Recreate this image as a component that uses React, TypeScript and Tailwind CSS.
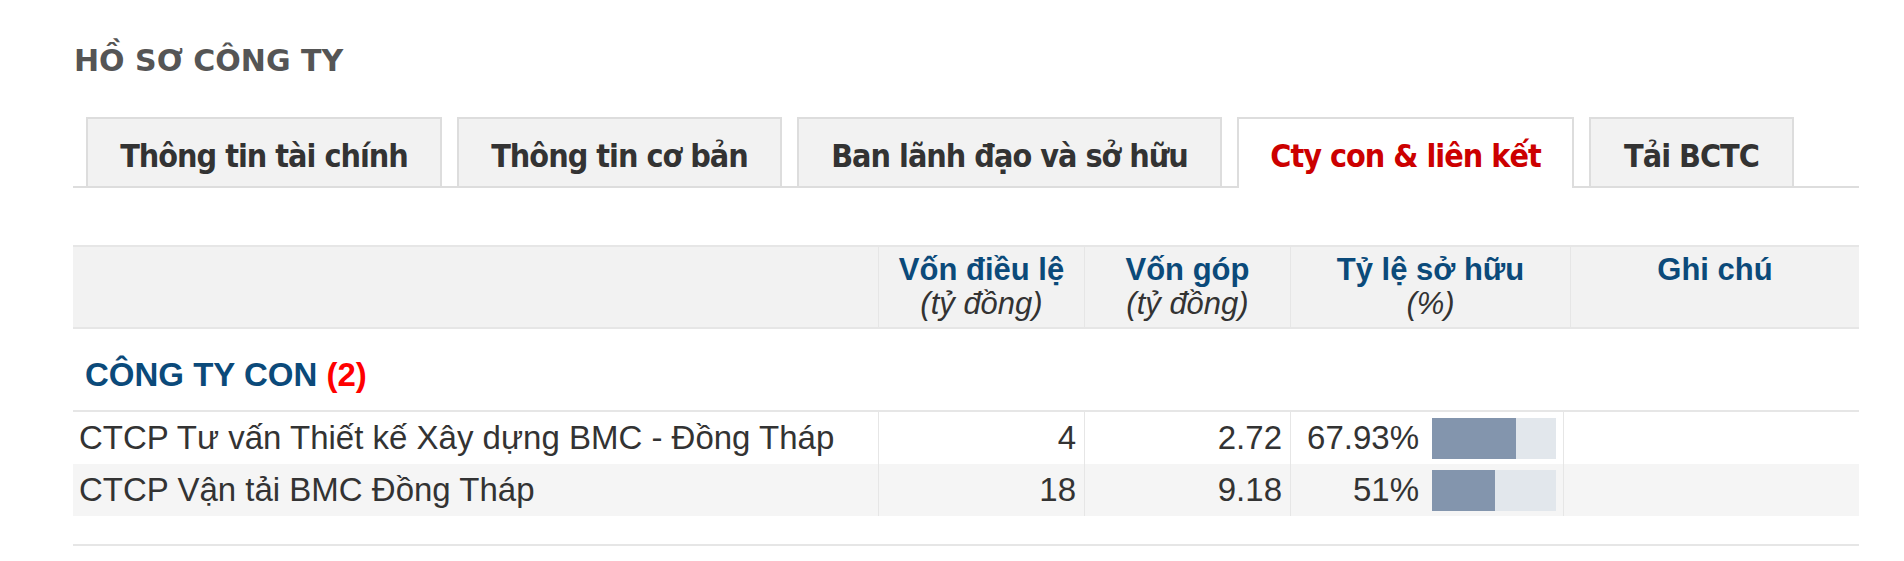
import React from 'react';

const TABS = [
  { label: 'Thông tin tài chính', w: 'w-[356px]' },
  { label: 'Thông tin cơ bản', w: 'w-[325px]' },
  { label: 'Ban lãnh đạo và sở hữu', w: 'w-[425px]' },
  { label: 'Cty con & liên kết', w: 'w-[337px]', active: true },
  { label: 'Tải BCTC', w: 'w-[205px]' },
];

const ROWS = [
  { name: 'CTCP Tư vấn Thiết kế Xây dựng BMC - Đồng Tháp', von: '4', gop: '2.72', pct: '67.93%', ratio: 67.93 },
  { name: 'CTCP Vận tải BMC Đồng Tháp', von: '18', gop: '9.18', pct: '51%', ratio: 51 },
];

// header and body columns are not quite the same in the original
const headGrid = 'grid grid-cols-[805px_206px_206px_280px_1fr]';
const bodyGrid = 'grid grid-cols-[805px_206px_206px_273px_1fr]';

export default function App() {
  return (
    <div className="min-h-screen bg-white pl-[73px] pr-[45px] pt-[37px] font-['Liberation_Sans',Arial,sans-serif]">
      {/* Title */}
      <h1 className="pl-[1px] text-[30px] leading-[48px] font-bold text-[#555] font-['DejaVu_Sans',sans-serif]">
        HỒ SƠ CÔNG TY
      </h1>

      {/* Tabs */}
      <div className="mt-[32px] flex items-end gap-[15px] pl-[13px] border-b-2 border-[#ddd]">
        {TABS.map(t => (
          <div
            key={t.label}
            className={`${t.w} flex items-center justify-center border-2 border-b-0 border-[#ddd] text-[32px] font-bold font-['DejaVu_Sans',sans-serif] font-stretch-condensed tracking-[-1px] pt-[6px] ${
              t.active ? 'h-[71px] -mb-[2px] bg-white text-[#cc0000] pb-[2px]' : 'h-[69px] bg-[#f2f2f2] text-[#333]'
            }`}
          >
            {t.label}
          </div>
        ))}
      </div>

      {/* Table */}
      <div className="mt-[57px] border-t-2 border-[#e6e6e6]">
        <div className={`${headGrid} h-[82px] bg-[#f2f2f2] border-b-2 border-[#e6e6e6] text-[31px] leading-[34px] text-center`}>
          <div />
          <div className="border-l border-[#e6e6e6] pt-[6px]">
            <div className="font-bold text-[#0b4a7a]">Vốn điều lệ</div>
            <div className="italic text-[#333]">(tỷ đồng)</div>
          </div>
          <div className="border-l border-[#e6e6e6] pt-[6px]">
            <div className="font-bold text-[#0b4a7a]">Vốn góp</div>
            <div className="italic text-[#333]">(tỷ đồng)</div>
          </div>
          <div className="border-l border-[#e6e6e6] pt-[6px]">
            <div className="font-bold text-[#0b4a7a]">Tỷ lệ sở hữu</div>
            <div className="italic text-[#333]">(%)</div>
          </div>
          <div className="border-l border-[#e6e6e6] pt-[6px]">
            <div className="font-bold text-[#0b4a7a]">Ghi chú</div>
          </div>
        </div>

        <div className="h-[83px] border-b-2 border-[#e6e6e6] pl-[12px] pt-[29px] text-[33px] leading-[33px] font-bold text-[#0b4a7a]">
          CÔNG TY CON <span className="text-[#ff0000]">(2)</span>
        </div>

        {ROWS.map((r, i) => (
          <div key={r.name} className={`${bodyGrid} h-[52px] text-[33px] text-[#333] ${i % 2 ? 'bg-[#f5f5f5]' : 'bg-white'}`}>
            <div className="flex items-center pl-[6px] whitespace-nowrap">{r.name}</div>
            <div className="flex items-center justify-end border-l border-[#e6e6e6] pr-[8px]">{r.von}</div>
            <div className="flex items-center justify-end border-l border-[#e6e6e6] pr-[8px]">{r.gop}</div>
            <div className="flex items-center border-l border-[#e6e6e6]">
              <div className="w-[128px] text-right">{r.pct}</div>
              <div className="ml-[13px] h-[41px] w-[124px] bg-[#e2e7ec]">
                <div className="h-full bg-[#8395ad]" style={{ width: `${r.ratio}%` }} />
              </div>
            </div>
            <div className="border-l border-[#e6e6e6]" />
          </div>
        ))}

        <div className="h-[30px] border-b-2 border-[#e6e6e6]" />
      </div>
    </div>
  );
}
